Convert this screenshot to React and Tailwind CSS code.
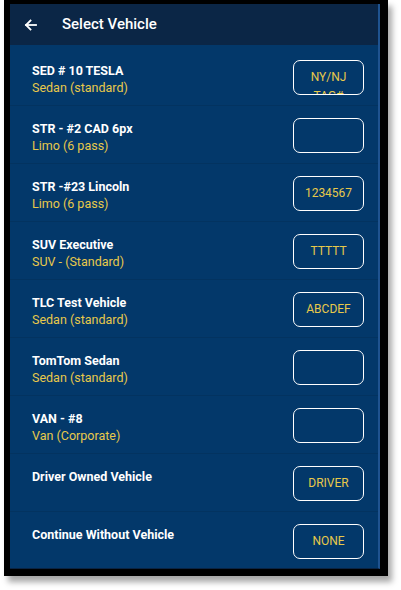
import React from "react";

const vehicles = [
  { name: "SED # 10 TESLA", type: "Sedan (standard)", tag: "NY/NJ TAG#" },
  { name: "STR - #2 CAD 6px", type: "Limo (6 pass)", tag: "" },
  { name: "STR -#23 Lincoln", type: "Limo (6 pass)", tag: "1234567" },
  { name: "SUV Executive", type: "SUV - (Standard)", tag: "TTTTT" },
  { name: "TLC Test Vehicle", type: "Sedan (standard)", tag: "ABCDEF" },
  { name: "TomTom Sedan", type: "Sedan (standard)", tag: "" },
  { name: "VAN - #8", type: "Van (Corporate)", tag: "" },
  { name: "Driver Owned Vehicle", type: "", tag: "DRIVER" },
  { name: "Continue Without Vehicle", type: "", tag: "NONE" },
];

export default function App() {
  return (
    <div className="w-[401px] h-[590px] bg-white font-['Roboto',sans-serif]">
      {/* phone frame */}
      <div className="ml-[4px] w-[384px] bg-black pt-[4px] pl-[6px] pr-[8px] pb-[7px] shadow-[4px_6px_6px_rgba(0,0,0,0.35)]">
        <div className="h-[565px] bg-[#03386a] border-r-2 border-[#1f5390] border-b border-b-[#0a2444] flex flex-col overflow-hidden">
          {/* header */}
          <div className="h-[41px] shrink-0 bg-[#0b2646] flex items-center">
            <svg className="ml-[14px]" width="13" height="12" viewBox="0 0 13 12" fill="none" stroke="white" strokeWidth="1.8" strokeLinecap="square">
              <path d="M12 6H2" />
              <path d="M6.5 1.5L2 6l4.5 4.5" />
            </svg>
            <div className="ml-[25px] text-white text-[15px] font-medium">Select Vehicle</div>
          </div>

          {/* list */}
          <div className="pt-[3px]">
            {vehicles.map((v, i) => (
              <div key={i} className="h-[58px] flex items-start border-b border-[#033360] pl-[22px] pr-[14px]">
                <div className="flex-1 pt-[14px]">
                  <div className="text-white text-[12.5px] font-bold leading-[17px]">{v.name}</div>
                  {v.type && (
                    <div className="text-[#e8c94a] text-[12.5px] leading-[17px]">{v.type}</div>
                  )}
                </div>
                <div className="mt-[12px] w-[71px] h-[35px] border-[1.5px] border-white rounded-[7px] pt-[7px] px-[4px] overflow-hidden text-center text-[#e8c94a] text-[12px] leading-[19px]">
                  {v.tag}
                </div>
              </div>
            ))}
          </div>
        </div>
      </div>
    </div>
  );
}
